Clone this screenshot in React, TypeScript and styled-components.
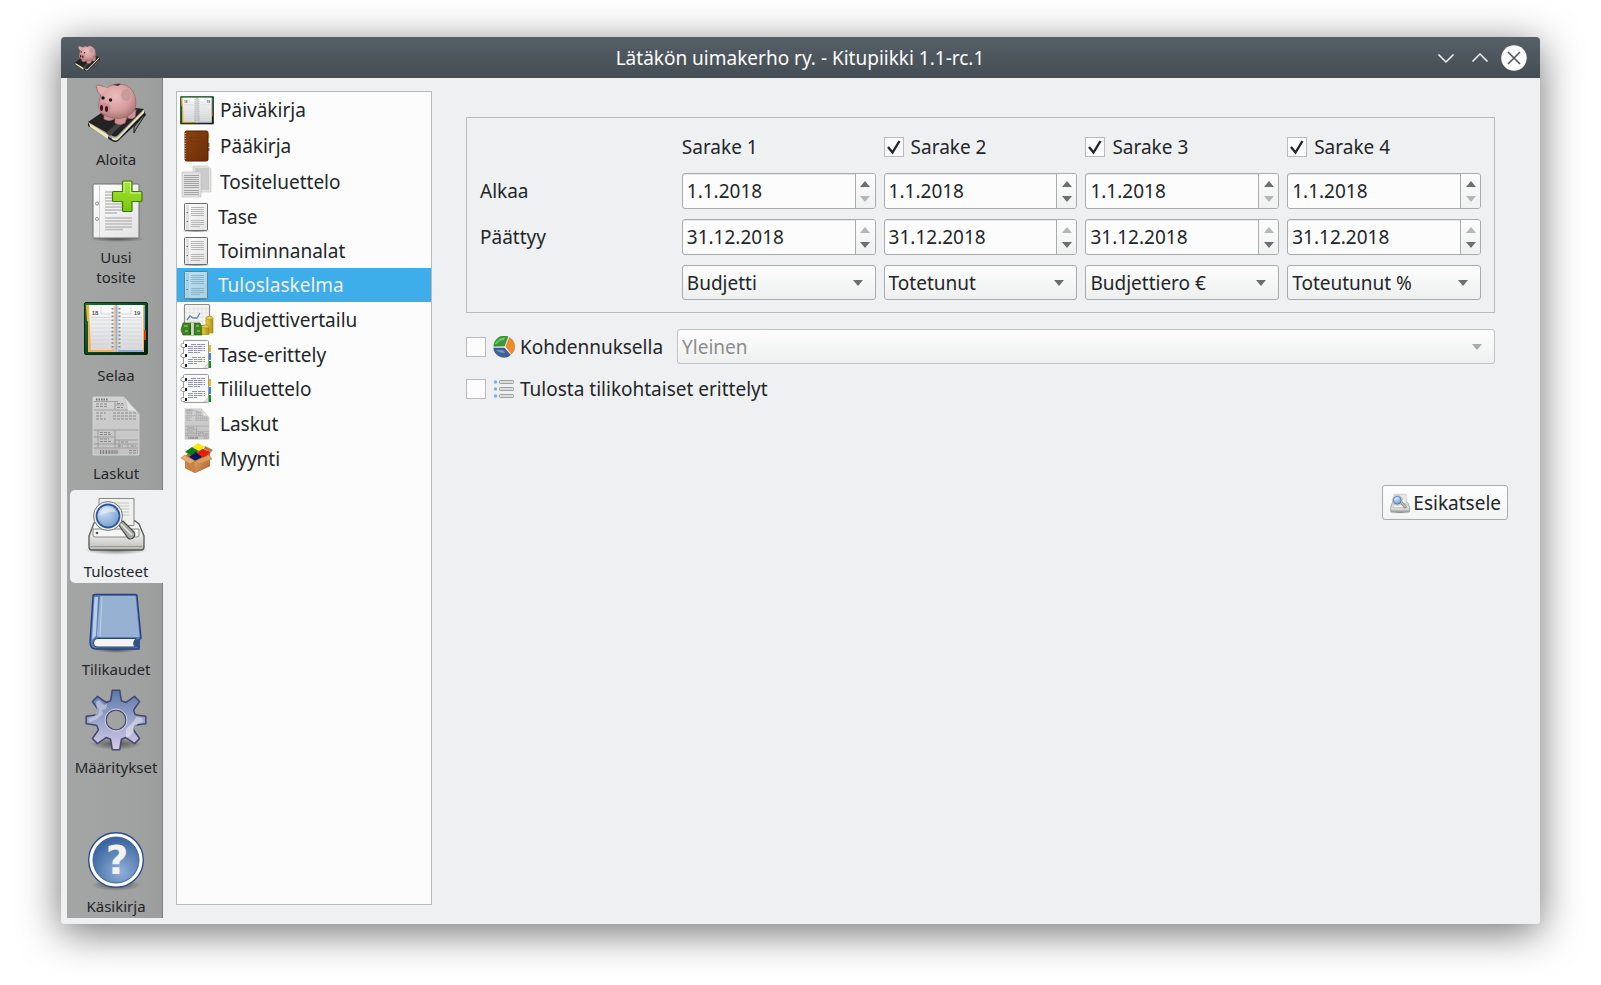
import React, { useId, useState } from "react";
import styled, { createGlobalStyle } from "styled-components";

const GlobalStyle = createGlobalStyle`
  *, *::before, *::after { box-sizing: border-box; }
  body {
    margin: 0;
    background: #fff;
    color: #232629;
    font: 19px/28px "Noto Sans", "Open Sans", sans-serif;
  }
  button, input, select { font: inherit; color: inherit; }
`;

/* ---------- window frame ---------- */

const Desktop = styled.div`
  display: flex;
  min-height: 100vh;
  padding: 37px 61px 61px;
`;

const Window = styled.div`
  flex: 1;
  min-width: 0;
  display: flex;
  flex-direction: column;
  border-radius: 4px 4px 3px 3px;
  background: #eff0f2;
  box-shadow: 0 8px 40px rgba(0, 0, 0, 0.56);
`;

const TitleBar = styled.header`
  display: grid;
  grid-template-columns: 1fr auto 1fr;
  align-items: center;
  height: 41px;
  padding: 0 13px 0 12px;
  border-radius: 4px 4px 0 0;
  background: linear-gradient(#566068, #454d54);
  color: #fcfcfc;
`;

const TitleIcon = styled.span`
  display: flex;
`;

const Title = styled.h1`
  margin: 0;
  font-size: 19px;
  line-height: 28px;
  font-weight: 400;
`;

const WindowButtons = styled.div`
  display: flex;
  justify-content: flex-end;
  gap: 8px;
`;

const WindowButton = styled.button`
  display: flex;
  width: 26px;
  height: 26px;
  padding: 0;
  border: 0;
  background: none;
`;

const Body = styled.div`
  flex: 1;
  display: flex;
`;

/* ---------- side bar ---------- */

const SideBar = styled.nav`
  display: flex;
  flex-direction: column;
  gap: 5px;
  width: 96px;
  margin: 0 0 6px 6px;
  padding-left: 3px;
  background: linear-gradient(90deg, #a4a5a5, #a0a1a1 70%, #9c9d9d);
  box-shadow: inset -1px 0 #7d7e7f;
`;

const SideButton = styled.button<{ $active?: boolean; $last?: boolean }>`
  display: flex;
  flex-direction: column;
  align-items: center;
  gap: 5px;
  min-height: 93px;
  margin: ${(p) => (p.$last ? "auto 0 0" : "0")};
  padding: 2px 1px 2px 0;
  border: 0;
  border-radius: 5px 0 0 5px;
  background: ${(p) => (p.$active ? "#eff0f2" : "none")};
  font-size: 15px;
  line-height: 20px;
`;

const SideLabel = styled.span`
  max-width: 90px;
  white-space: pre-line;
`;

/* ---------- report list ---------- */

const ReportList = styled.ul`
  width: 256px;
  margin: 13px 0 19px 13px;
  padding: 0;
  border: 1px solid #b9bbbc;
  background: #fcfcfc;
  list-style: none;
`;

const ReportButton = styled.button<{ $active: boolean; $tall: boolean }>`
  display: flex;
  align-items: center;
  gap: 6px;
  width: 100%;
  height: ${(p) => (p.$tall ? 36 : 34)}px;
  padding: 0 3px;
  border: 0;
  background: ${(p) => (p.$active ? "#3daee9" : "none")};
  color: ${(p) => (p.$active ? "#eff0f1" : "#232629")};
  svg { opacity: ${(p) => (p.$active ? 0.65 : 1)}; }
`;

/* ---------- report options ---------- */

const Options = styled.main`
  flex: 1;
  min-width: 0;
  display: flex;
  flex-direction: column;
  padding: 39px 32px 19px 34px;
`;

const OptionRows = styled.div`
  display: flex;
  flex-direction: column;
  margin-right: 13px;
`;

const ColumnGroup = styled.section`
  display: grid;
  grid-template-columns: repeat(5, minmax(0, 1fr));
  grid-template-rows: 32px;
  gap: 10px 8px;
  align-items: center;
  margin-bottom: 16px;
  padding: 13px 13px 12px;
  border: 1px solid #b9bbbc;
`;

const CheckLabel = styled.label`
  display: flex;
  align-items: center;
  gap: 7px;
`;

const CheckBox = styled.span`
  display: grid;
  width: 20px;
  height: 20px;
  > * { grid-area: 1 / 1; }
  svg { margin: 2px; pointer-events: none; }
  input:not(:checked) + svg { visibility: hidden; }
`;

const CheckInput = styled.input`
  appearance: none;
  width: 20px;
  height: 20px;
  margin: 0;
  border: 1px solid #b9bbbc;
  background: #fcfcfc;
`;

const SpinBox = styled.div`
  display: flex;
  height: 36px;
  overflow: hidden;
  border: 1px solid #a9abac;
  border-radius: 3px;
  background: #fcfcfc;
  box-shadow: inset 0 1px #e6e7e8;
`;

const SpinInput = styled.input`
  flex: 1;
  min-width: 0;
  padding: 0 4px;
  border: 0;
  background: none;
`;

const SpinButtons = styled.div`
  display: flex;
  flex-direction: column;
  gap: 1px;
  width: 20px;
  border-left: 1px solid #a9abac;
  background: linear-gradient(#fcfcfc, #f0f1f1);
`;

const SpinButton = styled.button<{ $up?: boolean }>`
  flex: 1;
  display: flex;
  align-items: ${(p) => (p.$up ? "flex-end" : "flex-start")};
  justify-content: center;
  padding: 4px 0;
  border: 0;
  background: none;
  color: #6c6e70;
  &:disabled { color: #b4b6b7; }
`;

const ComboFrame = styled.div`
  display: grid;
  flex: 1;
  align-items: center;
  > * { grid-area: 1 / 1; }
  svg {
    justify-self: end;
    margin-right: 13px;
    color: #6c6e70;
    pointer-events: none;
  }
  select:disabled + svg { color: #a9abac; }
`;

const ComboSelect = styled.select`
  appearance: none;
  width: 100%;
  height: 35px;
  padding: 0 30px 0 4px;
  border: 1px solid #a9abac;
  border-radius: 3px;
  background: linear-gradient(#fdfdfd, #eef0ef);
  &:disabled {
    border-color: #c0c2c3;
    color: #8b8d8f;
    opacity: 1;
  }
`;

const OptionRow = styled.div`
  display: flex;
  align-items: center;
  gap: 14px;
  height: 35px;
  & + & { margin-top: 7px; }
`;

const IconText = styled.span`
  display: flex;
  align-items: center;
  gap: 5px;
`;

const PreviewButton = styled.button`
  display: flex;
  align-items: center;
  align-self: flex-end;
  gap: 2px;
  height: 35px;
  margin-top: 79px;
  padding: 0 6px;
  border: 1px solid #a9abac;
  border-radius: 3px;
  background: linear-gradient(#fdfdfd, #f2f3f3);
`;

/* ---------- icons ---------- */

type IconProps = { size: number };

const Svg = styled.svg`
  display: block;
  flex: none;
`;

const HiddenSvg = styled.svg`
  position: absolute;
`;

const Gradients = () => (
  <HiddenSvg width="0" height="0" aria-hidden="true">
    <defs>
      <radialGradient id="pink" cx=".45" cy=".35" r=".7">
        <stop offset="0" stopColor="#ecbcbc" />
        <stop offset=".6" stopColor="#d79d9e" />
        <stop offset="1" stopColor="#a06d6f" />
      </radialGradient>
      <linearGradient id="lime" x1="0" y1="0" x2="0" y2="1">
        <stop offset="0" stopColor="#a9e63c" />
        <stop offset="1" stopColor="#79c40c" />
      </linearGradient>
      <linearGradient id="paper" x1="0" y1="0" x2="1" y2="1">
        <stop offset="0" stopColor="#fff" />
        <stop offset="1" stopColor="#e2e2e2" />
      </linearGradient>
      <linearGradient id="cover" x1="0" y1="0" x2="1" y2="1">
        <stop offset="0" stopColor="#1c7034" />
        <stop offset="1" stopColor="#04200d" />
      </linearGradient>
      <linearGradient id="leaf" x1="0" y1="0" x2="0" y2="1">
        <stop offset="0" stopColor="#fff" />
        <stop offset="1" stopColor="#d6d7d9" />
      </linearGradient>
      <linearGradient id="bill" x1="0" y1="0" x2="0" y2="1">
        <stop offset="0" stopColor="#d2d2d2" />
        <stop offset="1" stopColor="#c2c2c2" />
      </linearGradient>
      <linearGradient id="printer" x1="0" y1="0" x2="0" y2="1">
        <stop offset="0" stopColor="#fff" />
        <stop offset=".6" stopColor="#e0e0de" />
        <stop offset="1" stopColor="#b9b9b6" />
      </linearGradient>
      <radialGradient id="lens" cx=".35" cy=".3" r=".8">
        <stop offset="0" stopColor="#cfe0f4" />
        <stop offset="1" stopColor="#6d9ace" />
      </radialGradient>
      <linearGradient id="gear" x1="0" y1="0" x2="0" y2="1">
        <stop offset="0" stopColor="#5b78a8" />
        <stop offset=".5" stopColor="#9aa4cb" />
        <stop offset="1" stopColor="#d9c9e6" />
      </linearGradient>
      <radialGradient id="help" cx=".6" cy=".75" r=".7">
        <stop offset="0" stopColor="#8fb0d9" />
        <stop offset="1" stopColor="#3c679f" />
      </radialGradient>
      <linearGradient id="brown" x1="0" y1="0" x2="1" y2="1">
        <stop offset="0" stopColor="#8f420f" />
        <stop offset="1" stopColor="#6b2d06" />
      </linearGradient>
      <linearGradient id="gold" x1="0" y1="0" x2="1" y2="0">
        <stop offset="0" stopColor="#e9cf4e" />
        <stop offset="1" stopColor="#b08d12" />
      </linearGradient>
      <linearGradient id="carton" x1="0" y1="0" x2="1" y2="1">
        <stop offset="0" stopColor="#eab57c" />
        <stop offset="1" stopColor="#a9551d" />
      </linearGradient>
      <radialGradient id="ground">
        <stop offset="0" stopColor="#000" stopOpacity=".5" />
        <stop offset="1" stopColor="#000" stopOpacity="0" />
      </radialGradient>
    </defs>
  </HiddenSvg>
);

const Piggy = ({ size }: IconProps) => (
  <Svg width={size} height={size} viewBox="0 0 64 64">
    <path d="M4 43L28 59Q31 62 35 59L60 31L62 35L34 61Q31 63 28 61L4 46Z" fill="#1d1d1b" />
    <path d="M5 43L24 55V59L6 47ZM28 57Q31 60 35 56L60 30L60 33L33 60Q30 61 28 59Z" fill="#efe6c0" />
    <path d="M4 42L29 25L60 29L34 55Q31 58 27 55Z" fill="#232321" />
    <path d="M22 53L50 28L54 29L26 56Z" fill="#454543" />
    <path d="M61 35L52 49L50 53L50 47L58 37Z" fill="#8d8d89" stroke="#1d1d1b" />
    <path d="M20 33V39Q25 42 30 39V35ZM31 35V43Q36 46 41 43L43 36ZM44 32V38Q48 40 51 37L52 30Z" fill="#cf9394" stroke="#ab7072" strokeWidth=".7" />
    <path d="M19 6Q14 4 12 6Q13 13 17 16Z" fill="#dca5a6" stroke="#9d696b" strokeWidth=".8" />
    <path d="M17 14Q25 3 36 4Q48 5 51 16Q54 29 47 34Q37 42 22 36Q13 33 15 22Z" fill="url(#pink)" stroke="#9d696b" strokeWidth=".8" />
    <path d="M13 6L24 8L17 15Z" fill="#e2aeae" />
    <ellipse cx="42" cy="15" rx="5" ry="6" fill="#c1999a" opacity=".8" />
    <path d="M29 5Q34 3 37 4L34 6Z" fill="#5b2a2c" />
    <ellipse cx="20.500" cy="28" rx="6" ry="5" fill="#cb8e90" />
    <circle cx="19" cy="18" r="1.700" fill="#161314" /><circle cx="26.500" cy="20" r="1.700" fill="#161314" />
    <ellipse cx="17.500" cy="28" rx="1.500" ry="3" fill="#431215" /><ellipse cx="22.500" cy="29" rx="1.500" ry="3" fill="#431215" />
  </Svg>
);

const lines = (x: number, w: number, ys: number[]) => ys.map((y) => `M${x} ${y}h${w}`).join("");

const NewVoucher = ({ size }: IconProps) => (
  <Svg width={size} height={size} viewBox="0 0 64 64">
    <ellipse cx="33" cy="61" rx="28" ry="3" fill="url(#ground)" />
    <rect x="9" y="6" width="46" height="54" rx="1.500" fill="url(#paper)" stroke="#6d6d6d" />
    <path d="M15.500 7v52" stroke="#d0d0d0" />
    <circle cx="13" cy="25.500" r="1.500" fill="#fff" stroke="#777" strokeWidth=".8" /><circle cx="13" cy="41" r="1.500" fill="#fff" stroke="#777" strokeWidth=".8" />
    <path d={lines(21, 27, [14, 17, 20, 23, 26, 29, 32, 40, 43, 46, 49]) + "M21 35h12M21 51.500h18"} stroke="#b9b9b9" strokeWidth="1.300" />
    <path d="M39.500 3h7.500q1 0 1 1v9.500h9q1 0 1 1v8q0 1-1 1h-9v9q0 1-1 1h-7.500q-1 0-1-1v-9h-9q-1 0-1-1v-8q0-1 1-1h9v-9.500q0-1 1-1z" fill="url(#lime)" stroke="#3d7a04" strokeWidth="1.200" />
    <path d="M40 15V4.500h6.500V15H57" fill="none" stroke="#d0f58c" />
  </Svg>
);

const Planner = ({ size }: IconProps) => (
  <Svg width={size} height={size} viewBox="0 0 64 64">
    <rect x=".5" y="6.500" width="63" height="52" rx="1.500" fill="url(#cover)" stroke="#06290f" />
    <path d="M2 9h4v18l-3-2z" fill="#f2b436" /><path d="M58 9h3v25h-3z" fill="#7f9ddb" /><path d="M58 34h4v10h-4z" fill="#d6381c" />
    <path d="M4 9h56v47H4z" fill="#f2b45a" /><path d="M32 9h27v47H32z" fill="#8ea9e0" />
    <path d="M5 9h26v45H7z" fill="url(#leaf)" /><path d="M33 9h26v45H33z" fill="url(#leaf)" />
    <path d={lines(7, 20, [24, 28, 32, 36, 40, 44, 48]) + lines(38, 20, [24, 28, 32, 36, 40, 44, 48])} stroke="#cdd0d4" strokeWidth=".7" />
    <path d="M7 21.500h20M38 21.500h20M17 11v7h10M47 11v7H37" fill="none" stroke="#c3c6c9" strokeWidth=".7" />
    <path d="M30.500 10v46M33.500 10v46" stroke="#cbcdcf" strokeWidth="1.500" />
    <path d="M28.500 12v42M35.500 12v42" stroke="#85888a" strokeWidth="2" strokeDasharray="1.600 2.200" />
    <text x="11" y="19" fontFamily="Liberation Sans" fontWeight="700" fontSize="6" textAnchor="middle" fill="#55595c">18</text>
    <text x="53" y="19" fontFamily="Liberation Sans" fontWeight="700" fontSize="6" textAnchor="middle" fill="#55595c">19</text>
  </Svg>
);

const Invoice = ({ size }: IconProps) => (
  <Svg width={size} height={size} viewBox="0 0 64 64">
    <path d="M9 3h31l15 17v41H9z" fill="url(#bill)" stroke="#d8d8d8" strokeWidth=".8" />
    <path d="M40 3q4 8 3 14q6-1 12 3z" fill="#e3e3e3" stroke="#b0b0b0" strokeWidth=".5" />
    <path d="M10 7.500h24M10 16h34M31 8v8M31 11h9M9.500 36h45M31 36v14M9.500 43h22M31 46h23M9.500 50h45M9.500 54h45M14 36v18M31 46v8M35 46v8M44 50v4" stroke="#949494" strokeWidth=".8" fill="none" />
    <path d="M12 5.500h12" stroke="#777" strokeWidth="2" strokeDasharray="1.500 1" />
    <path d="M12 10h11M12 12.500h11M33 9.500h6M33 13.500h6M12 19h10M12 22h6M12 25h10M29 19h24M29 22h24M29 25h24M16 38.500h10M16 40.500h12M16 45h9M16 47.500h12M37 48h8M34 52h5M47 52h5M45 56.500h9M45 59h9" stroke="#8a8a8a" strokeDasharray="3 1" />
    <path d="M16 58h18" stroke="#777" strokeWidth="4" strokeDasharray="1 .8 .5 .8" />
  </Svg>
);

const Printer = ({ size }: IconProps) => (
  <Svg width={size} height={size} viewBox="0 0 64 64">
    <ellipse cx="32" cy="58" rx="32" ry="5" fill="url(#ground)" />
    <path d="M10 31L14 29H51L55 32L60 44V55Q60 58 57 58H8Q5 58 5 55V44Z" fill="url(#printer)" stroke="#555753" strokeWidth="1.300" />
    <path d="M9 37h46v6q0 2-2 2H11q-2 0-2-2z" fill="#f5f5f4" stroke="#888a85" />
    <path d="M6.500 54.500h52" stroke="#9a9a97" />
    <path d="M15 6.500h35v27H15z" fill="#f0f0ef" stroke="#888a85" />
    <path d={lines(28, 17, [11, 14, 17, 20, 23])} stroke="#c6c6c4" />
    <circle cx="13" cy="41" r="1.300" fill="#555" />
    <path d="M34 32L39 29L50 40Q52 43 49 46Q46 48 44 46Z" fill="#a7a9a5" stroke="#4b4d49" strokeWidth="1.200" />
    <path d="M37 32L48 43" stroke="#e8e8e6" strokeWidth="1.500" />
    <circle cx="24" cy="24" r="14.500" fill="#eeeeec" stroke="#777975" strokeWidth="1" />
    <circle cx="24" cy="24" r="11.500" fill="url(#lens)" stroke="#2b5b9f" strokeWidth="1.800" />
    <path d="M15 24Q16 15 25 15Q31 16 32 20Q25 19 15 24Z" fill="#fff" opacity=".4" />
  </Svg>
);

const Book = ({ size }: IconProps) => (
  <Svg width={size} height={size} viewBox="0 0 64 64">
    <ellipse cx="32" cy="60" rx="22" ry="3" fill="url(#ground)" />
    <path d="M9 6Q9 4.500 11 4.500H51Q53 4.500 53 6L57 48L55 50V59H12Q6 59 6 52Z" fill="#5a7fb6" stroke="#26427d" strokeWidth="1.400" />
    <path d="M16 6H51.500L55.500 47H15Q12 47 13 44Z" fill="#97b1d2" />
    <path d="M10.500 7H14L12 46Q9 48 8 50Z" fill="#b9cde6" /><path d="M18 6.500L16 46" stroke="#bdd0e8" />
    <path d="M13 48.500H52Q48 53 51 57H13Q9.500 57 9.500 53T13 48.500Z" fill="#f4f4f2" stroke="#26427d" />
    <path d="M56 49Q50 49 50 53Q50 58 56 58Z" fill="#34508b" />
  </Svg>
);

const gearPath = (() => {
  const at = (r: number, deg: number) => {
    const a = (deg * Math.PI) / 180;
    return `${(32 + r * Math.sin(a)).toFixed(1)} ${(32 - r * Math.cos(a)).toFixed(1)}`;
  };
  let d = "";
  for (let i = 0; i < 8; i++) {
    const c = i * 45;
    d += `${i ? "L" : "M"}${at(20, c - 16)}L${at(23, c - 12)}L${at(30, c - 7)}L${at(30, c + 7)}L${at(23, c + 12)}L${at(20, c + 16)}`;
  }
  return d + "Z";
})();

const Gear = ({ size }: IconProps) => (
  <Svg width={size} height={size} viewBox="0 0 64 64">
    <ellipse cx="32" cy="56" rx="26" ry="6" fill="url(#ground)" />
    <path d={gearPath + "M42 32a10 10 0 1 0-20 0a10 10 0 1 0 20 0Z"} fillRule="evenodd" fill="url(#gear)" stroke="#414a6e" strokeWidth="1.500" strokeLinejoin="round" />
    <path d="M4 31L11 28L13 22L12 14L15 12L20 17L23 16L22 21L18 22L19 26L13 31L6 34Z" fill="#d6dcec" opacity=".55" />
    <path d="M58 30L52 29L50 33L46 37L42 41L42 50L46 48L49 44L54 35L59 34Z" fill="#fff" opacity=".4" />
    <circle cx="32" cy="32" r="11" fill="none" stroke="#d5d8e8" strokeWidth="1" />
  </Svg>
);

const Help = ({ size }: IconProps) => (
  <Svg width={size} height={size} viewBox="0 0 64 64">
    <ellipse cx="32" cy="58" rx="25" ry="6" fill="url(#ground)" />
    <circle cx="32" cy="33" r="27.300" fill="#fff" stroke="#2a4f8d" strokeWidth="1.400" />
    <circle cx="32" cy="33" r="23" fill="url(#help)" stroke="#3a629c" />
    <text x="33" y="47" textAnchor="middle" fontFamily="DejaVu Sans" fontWeight="700" fontSize="39" fill="#f2f2f2">?</text>
  </Svg>
);

const BrownBook = ({ size }: IconProps) => (
  <Svg width={size} height={size} viewBox="0 0 34 34">
    <path d="M27 5h2.500v4H27z" fill="#c6d454" /><path d="M27 14h2.500v4H27z" fill="#3fae3f" /><path d="M27 19h2.500v3H27z" fill="#c33fae" />
    <rect x="5" y="2" width="23" height="30" rx="1.500" fill="url(#brown)" stroke="#4f2306" />
    <path d="M5 4v26" stroke="#b9a799" strokeWidth="2" strokeDasharray="1 1.500" />
    <rect x="10.500" y="8.500" width="11" height="4" fill="none" stroke="#763610" />
  </Svg>
);

const TwoPages = ({ size }: IconProps) => (
  <Svg width={size} height={size} viewBox="0 0 34 34">
    <path d="M13 1h15l3 3v23H13z" fill="#e2e2e2" stroke="#c6c6c6" strokeWidth=".6" />
    <path d={lines(15, 14, [4, 6, 8, 10, 12, 14, 16, 18, 20, 22, 24])} stroke="#a9a9a9" strokeWidth=".8" />
    <path d="M2 7h19v25H2z" fill="#e2e2e2" stroke="#bdbdbd" strokeWidth=".6" />
    <path d={lines(4, 15, [10.5, 12.5, 14.5, 16.5, 18.5, 20.5, 22.5, 25.5, 27.5, 29.5])} stroke="#9c9c9c" strokeWidth=".9" />
  </Svg>
);

const Page = ({ size }: IconProps) => (
  <Svg width={size} height={size} viewBox="0 0 32 32">
    <ellipse cx="16" cy="30" rx="15" ry="1.500" fill="url(#ground)" />
    <rect x="4.500" y="2.500" width="23" height="27" rx=".8" fill="url(#paper)" stroke="#6b6b6b" />
    <path d="M6 4h3v25H6z" fill="#e0e0e0" />
    <path d="M6.500 11.500h1.500M6.500 20.500h1.500" stroke="#777" />
    <path d={lines(11, 13, [6.5, 8.5, 10.5, 12.500, 14.5, 19.5, 21.5, 23.5]) + "M11 25.500h9"} stroke="#b5b5b5" />
  </Svg>
);

const Budget = ({ size }: IconProps) => (
  <Svg width={size} height={size} viewBox="0 0 34 34">
    <rect x="4.500" y="1.500" width="25" height="21" rx="1" fill="#f4f4f3" stroke="#8b8d89" strokeWidth="1.200" />
    <path d={lines(6, 22, [6, 10, 14, 18]) + "M10 3v18M14 3v18M18 3v18M22 3v18M26 3v18"} stroke="#dcdcda" strokeWidth=".7" />
    <path d="M7 17L10 13L13 15L17 15L20 10" fill="none" stroke="#6385b8" strokeWidth="1.300" />
    <path d="M26 15h7v15h-7z" fill="url(#gold)" stroke="#a3850f" strokeWidth=".6" /><ellipse cx="29.500" cy="15" rx="3.600" ry="1.700" fill="#e6d04d" stroke="#a3850f" strokeWidth=".6" />
    <path d="M3 20h17l2 5v7H3L1 27z" fill="#3e8421" stroke="#265e10" strokeWidth=".7" />
    <path d="M4 23h4M5 28h3M16 23h3M17 28h3" stroke="#85bd5e" strokeWidth="1.500" /><path d="M9 26Q9 21 12 21Q15 21 15 26V32H9Z" fill="#2c6a13" /><path d="M11 20h3v12h-3z" fill="#c9d3c6" />
    <path d="M22 23.500h7v8h-7z" fill="url(#gold)" stroke="#a3850f" strokeWidth=".6" /><ellipse cx="25.500" cy="23.500" rx="3.600" ry="1.600" fill="#e6d04d" stroke="#a3850f" strokeWidth=".6" />
  </Svg>
);

const Notebook = ({ size }: IconProps) => (
  <Svg width={size} height={size} viewBox="0 0 32 32">
    <path d="M28 6h3v7h-3z" fill="#f2b90f" /><path d="M28 14h3v7h-3z" fill="#3a84e8" /><path d="M28 22h3v7h-3z" fill="#12900f" />
    <rect x="3.500" y="1.500" width="25" height="28" rx="1" fill="#fbfbfb" stroke="#9b9b9b" />
    <path d="M28 24v5h-5z" fill="#d9dce8" />
    <path d={lines(8, 17, [7.5, 9.5, 11.5, 20.5, 22.5]) + "M11 5.500h14M8 13.500h12M12 18.500h13M8 24.500h9"} stroke="#8c93b8" strokeDasharray="5 1 3 .5" />
    <path d="M5 5h2v3H5zM5 15h2v3H5zM5 25h2v3H5z" fill="#222" />
    <path d="M4 4.500H2.500a1.500 2 0 0 0 0 4H5M4 14.500H2.500a1.500 2 0 0 0 0 4H5M4 24.500H2.500a1.500 2 0 0 0 0 4H5" fill="#fff" stroke="#999" />
  </Svg>
);

const Carton = ({ size }: IconProps) => (
  <Svg width={size} height={size} viewBox="0 0 34 34">
    <path d="M5 14L18 4L30 11V24L15 31L5 26Z" fill="#b4662b" />
    <path d="M5 14L15 20V31L5 26Z" fill="#cb8246" /><path d="M15 20L30 12V24L15 31Z" fill="url(#carton)" />
    <path d="M12 5L18 1L25 5L19 9Z" fill="#f4ea10" /><path d="M5 10L12 5L18 9L12 14Z" fill="#0d7a17" />
    <path d="M17 11L23 7L31 10L23 16Z" fill="#e81c10" /><path d="M9 15L16 10L22 15L15 19Z" fill="#0a1662" />
    <path d="M5 13L15 19L10 22L1 16Z" fill="#e4ab72" stroke="#b57032" strokeWidth=".5" />
    <path d="M15 19L29 13L32 17L19 22Z" fill="#dd9d60" stroke="#b57032" strokeWidth=".5" />
    <path d="M25 4L33 8L31 10L24 7Z" fill="#bd7238" />
  </Svg>
);

const Pie = ({ size }: IconProps) => (
  <Svg width={size} height={size} viewBox="0 0 22 22">
    <path d="M13 10.500L16.500 1.500A10.500 10.500 0 0 1 18.500 18Z" fill="#ee8a2a" stroke="#c96410" strokeWidth=".5" />
    <path d="M11.500 10L15 .6A10.500 10.500 0 0 0 .8 10.300Z" fill="#3a9d34" stroke="#26781f" strokeWidth=".5" />
    <path d="M11.500 12H.7A10.300 10 0 0 0 17.500 19Z" fill="#3f609b" stroke="#2b4677" strokeWidth=".5" />
    <path d="M2 8Q5 2 12 1.500L11 4Q6 4 4 8Z" fill="#a4dc9c" opacity=".6" /><path d="M3 14h7l2 3q-6 0-9-3z" fill="#9db6dc" opacity=".6" />
  </Svg>
);

const Bullets = ({ size }: IconProps) => (
  <Svg width={size} height={size} viewBox="0 0 22 22">
    {[4, 11, 18].map((y) => (
      <g key={y}>
        <circle cx="2.500" cy={y} r="1.700" fill="#7aaef0" />
        <rect x="6.500" y={y - 1.5} width="14" height="3" rx=".8" fill="#dcdcdb" stroke="#969894" strokeWidth=".9" />
      </g>
    ))}
  </Svg>
);

const Arrow = ({ up = false }: { up?: boolean }) => (
  <Svg width="10" height="6" viewBox="0 0 10 6">
    <path d={up ? "M0 6L5 0L10 6Z" : "M0 0L5 6L10 0Z"} fill="currentColor" />
  </Svg>
);

/* ---------- controls ---------- */

const Check = ({ label, children, initial = false }: { label?: string; children?: React.ReactNode; initial?: boolean }) => {
  const [on, setOn] = useState(initial);
  return (
    <CheckLabel>
      <CheckBox>
        <CheckInput type="checkbox" checked={on} onChange={() => setOn(!on)} />
        <Svg width="16" height="16" viewBox="0 0 16 16">
          <path d="M2 8L6.500 13.500L13.500 2" fill="none" stroke="#232629" strokeWidth="2.400" />
        </Svg>
      </CheckBox>
      {label ?? children}
    </CheckLabel>
  );
};

const DateSpin = ({ value, label, up = true, down = true }: { value: string; label: string; up?: boolean; down?: boolean }) => (
  <SpinBox>
    <SpinInput type="text" defaultValue={value} aria-label={label} />
    <SpinButtons>
      <SpinButton type="button" $up aria-label={`${label} +`} disabled={!up}><Arrow up /></SpinButton>
      <SpinButton type="button" aria-label={`${label} -`} disabled={!down}><Arrow /></SpinButton>
    </SpinButtons>
  </SpinBox>
);

const Combo = ({ value, label, options = [value], disabled }: { value: string; label: string; options?: string[]; disabled?: boolean }) => (
  <ComboFrame>
    <ComboSelect defaultValue={value} aria-label={label} disabled={disabled}>
      {options.map((o) => <option key={o}>{o}</option>)}
    </ComboSelect>
    <Arrow />
  </ComboFrame>
);

/* ---------- data ---------- */

const sections = [
  { label: "Aloita", Icon: Piggy },
  { label: "Uusi\ntosite", Icon: NewVoucher },
  { label: "Selaa", Icon: Planner },
  { label: "Laskut", Icon: Invoice },
  { label: "Tulosteet", Icon: Printer },
  { label: "Tilikaudet", Icon: Book },
  { label: "Määritykset", Icon: Gear },
  { label: "Käsikirja", Icon: Help },
];

const reports = [
  { label: "Päiväkirja", Icon: Planner, size: 34, tall: true },
  { label: "Pääkirja", Icon: BrownBook, size: 34, tall: true },
  { label: "Tositeluettelo", Icon: TwoPages, size: 34, tall: true },
  { label: "Tase", Icon: Page, size: 32, tall: false },
  { label: "Toiminnanalat", Icon: Page, size: 32, tall: false },
  { label: "Tuloslaskelma", Icon: Page, size: 32, tall: false },
  { label: "Budjettivertailu", Icon: Budget, size: 34, tall: true },
  { label: "Tase-erittely", Icon: Notebook, size: 32, tall: false },
  { label: "Tililuettelo", Icon: Notebook, size: 32, tall: false },
  { label: "Laskut", Icon: Invoice, size: 34, tall: true },
  { label: "Myynti", Icon: Carton, size: 34, tall: false },
];

const columns = ["Sarake 1", "Sarake 2", "Sarake 3", "Sarake 4"];
const contents = ["Budjetti", "Totetunut", "Budjettiero €", "Toteutunut %"];

export default function App() {
  const [section, setSection] = useState("Tulosteet");
  const [report, setReport] = useState("Tuloslaskelma");
  const groupId = useId();

  return (
    <>
      <GlobalStyle />
      <Gradients />
      <Desktop>
        <Window>
          <TitleBar>
            <TitleIcon><Piggy size={28} /></TitleIcon>
            <Title>Lätäkön uimakerho ry. - Kitupiikki 1.1-rc.1</Title>
            <WindowButtons>
              <WindowButton type="button" aria-label="Pienennä">
                <Svg width="26" height="26" viewBox="0 0 26 26"><path d="M5.500 9.500L13 17L20.500 9.500" fill="none" stroke="#fcfcfc" strokeWidth="1.500" /></Svg>
              </WindowButton>
              <WindowButton type="button" aria-label="Suurenna">
                <Svg width="26" height="26" viewBox="0 0 26 26"><path d="M5.500 16.500L13 9L20.500 16.500" fill="none" stroke="#fcfcfc" strokeWidth="1.500" /></Svg>
              </WindowButton>
              <WindowButton type="button" aria-label="Sulje">
                <Svg width="26" height="26" viewBox="0 0 26 26">
                  <circle cx="13" cy="13" r="12.800" fill="#fcfcfc" />
                  <path d="M7 7L19 19M19 7L7 19" stroke="#4a5258" strokeWidth="1.500" />
                </Svg>
              </WindowButton>
            </WindowButtons>
          </TitleBar>
          <Body>
            <SideBar>
              {sections.map(({ label, Icon }, i) => (
                <SideButton
                  key={label}
                  type="button"
                  $active={section === label}
                  $last={i === sections.length - 1}
                  onClick={() => setSection(label)}
                >
                  <Icon size={64} />
                  <SideLabel>{label}</SideLabel>
                </SideButton>
              ))}
            </SideBar>
            <ReportList>
              {reports.map(({ label, Icon, size, tall }) => (
                <li key={label}>
                  <ReportButton type="button" $active={report === label} $tall={tall} onClick={() => setReport(label)}>
                    <Icon size={size} />
                    {label}
                  </ReportButton>
                </li>
              ))}
            </ReportList>
            <Options>
              <OptionRows>
                <ColumnGroup aria-labelledby={groupId}>
                  <span />
                  <span id={groupId}>{columns[0]}</span>
                  {columns.slice(1).map((c) => <Check key={c} label={c} initial />)}
                  <span>Alkaa</span>
                  {columns.map((c, i) => <DateSpin key={c} label={`Alkaa ${c}`} value="1.1.2018" down={i === 1} />)}
                  <span>Päättyy</span>
                  {columns.map((c) => <DateSpin key={c} label={`Päättyy ${c}`} value="31.12.2018" up={false} />)}
                  <span />
                  {columns.map((c, i) => <Combo key={c} label={c} value={contents[i]} options={contents} />)}
                </ColumnGroup>
                <OptionRow>
                  <Check><IconText><Pie size={22} />Kohdennuksella</IconText></Check>
                  <Combo label="Kohdennus" value="Yleinen" disabled />
                </OptionRow>
                <OptionRow>
                  <Check><IconText><Bullets size={22} />Tulosta tilikohtaiset erittelyt</IconText></Check>
                </OptionRow>
              </OptionRows>
              <PreviewButton type="button"><Printer size={22} />Esikatsele</PreviewButton>
            </Options>
          </Body>
        </Window>
      </Desktop>
    </>
  );
}
